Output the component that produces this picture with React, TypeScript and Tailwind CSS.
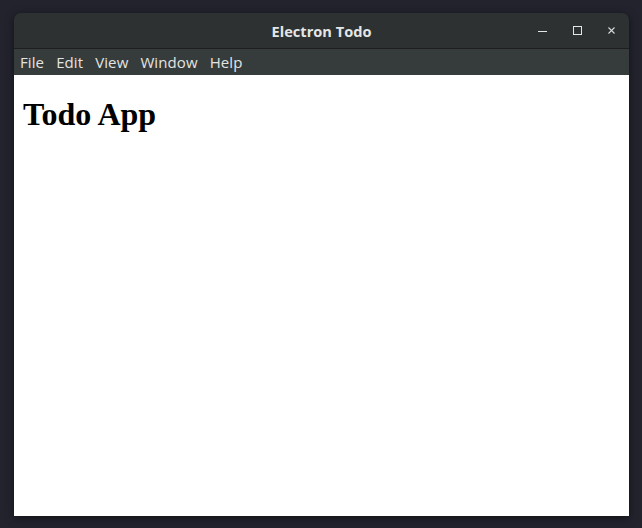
export default function App() {
  const menus = ['File', 'Edit', 'View', 'Window', 'Help'];

  return (
    <div className="w-[642px] h-[528px] bg-[#22232d] pt-[13px] pl-[14px] overflow-hidden">
      <div className="w-[615px] h-[503px] flex flex-col rounded-t-[7px] overflow-hidden shadow-[0_2px_8px_rgba(0,0,0,0.5)]">
        {/* Title bar */}
        <div className="h-[36px] bg-[#2d3132] border-b border-[#1c1e1f] flex items-center relative shrink-0">
          <span className="w-full text-center text-[14.6px] font-bold text-[#e4e6e6] font-['Open_Sans',sans-serif] leading-none pt-[1px]">
            Electron Todo
          </span>
          <div className="absolute right-0 top-0 h-full flex items-center">
            <div className="w-[34px] flex justify-center mr-[1px]">
              <div className="w-[9px] h-[1px] bg-[#e6e6e6] mt-[1px]" />
            </div>
            <div className="w-[34px] flex justify-center">
              <div className="w-[9px] h-[9px] border border-[#e6e6e6]" />
            </div>
            <div className="w-[34px] flex justify-center mr-[1px]">
              <svg width="7" height="7" viewBox="0 0 7 7">
                <path d="M0.5 0.5L6.5 6.5M6.5 0.5L0.5 6.5" stroke="#d8d8d8" strokeWidth="1.1" />
              </svg>
            </div>
          </div>
        </div>
        {/* Menu bar */}
        <div className="h-[26px] bg-[#363c3b] flex items-center pl-[6px] gap-[12px] shrink-0">
          {menus.map(m => (
            <span key={m} className="text-[15px] text-[#e4e4e2] font-['Open_Sans',sans-serif] leading-none tracking-[0.1px]">
              {m}
            </span>
          ))}
        </div>
        {/* Content */}
        <div className="flex-1 bg-white pl-[9px] pr-[8px] pt-[21px]">
          <h1 className="text-[32px] font-bold leading-[37px] text-black font-['Liberation_Serif',serif]">
            Todo App
          </h1>
        </div>
      </div>
    </div>
  );
}
